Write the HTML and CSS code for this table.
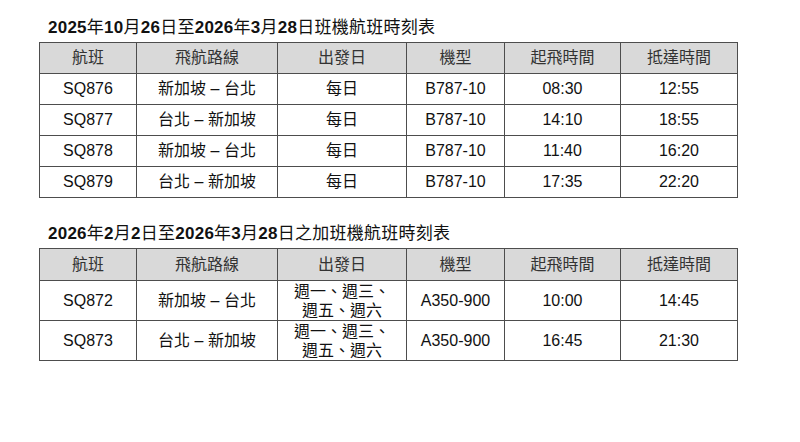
FILE: index.html
```html
<!DOCTYPE html>
<html lang="zh-Hant">
<head>
<meta charset="utf-8">
<title>航班時刻表</title>
<link rel="stylesheet" href="styles.css">
</head>
<body>
<main class="page">
  <section class="block block-first">
    <h2 class="title"><b>2025</b>年<b>10</b>月<b>26</b>日至<b>2026</b>年<b>3</b>月<b>28</b>日班機航班時刻表</h2>
    <table class="schedule">
      <colgroup>
        <col class="c1"><col class="c2"><col class="c3"><col class="c4"><col class="c5"><col class="c6">
      </colgroup>
      <thead>
        <tr><th>航班</th><th>飛航路線</th><th>出發日</th><th>機型</th><th>起飛時間</th><th>抵達時間</th></tr>
      </thead>
      <tbody>
        <tr><td>SQ876</td><td>新加坡 – 台北</td><td>每日</td><td>B787-10</td><td>08:30</td><td>12:55</td></tr>
        <tr><td>SQ877</td><td>台北 – 新加坡</td><td>每日</td><td>B787-10</td><td>14:10</td><td>18:55</td></tr>
        <tr><td>SQ878</td><td>新加坡 – 台北</td><td>每日</td><td>B787-10</td><td>11:40</td><td>16:20</td></tr>
        <tr><td>SQ879</td><td>台北 – 新加坡</td><td>每日</td><td>B787-10</td><td>17:35</td><td>22:20</td></tr>
      </tbody>
    </table>
  </section>
  <section class="block block-second">
    <h2 class="title"><b>2026</b>年<b>2</b>月<b>2</b>日至<b>2026</b>年<b>3</b>月<b>28</b>日之加班機航班時刻表</h2>
    <table class="schedule schedule-tall">
      <colgroup>
        <col class="c1"><col class="c2"><col class="c3"><col class="c4"><col class="c5"><col class="c6">
      </colgroup>
      <thead>
        <tr><th>航班</th><th>飛航路線</th><th>出發日</th><th>機型</th><th>起飛時間</th><th>抵達時間</th></tr>
      </thead>
      <tbody>
        <tr><td>SQ872</td><td>新加坡 – 台北</td><td>週一、週三、<br>週五、週六</td><td>A350-900</td><td>10:00</td><td>14:45</td></tr>
        <tr><td>SQ873</td><td>台北 – 新加坡</td><td>週一、週三、<br>週五、週六</td><td>A350-900</td><td>16:45</td><td>21:30</td></tr>
      </tbody>
    </table>
  </section>
</main>
</body>
</html>
```

FILE: styles.css
```css
html, body {
  margin: 0;
  padding: 0;
  background: #ffffff;
}

body {
  font-family: "Liberation Sans", "Noto Sans CJK TC", sans-serif;
  color: #111;
}

.page {
  padding: 18px 0 0 39px;
}

.block-second {
  margin-top: 26px;
}

.title {
  margin: 0 0 4px 9px;
  font-size: 17px;
  line-height: 20px;
  font-weight: 400;
  letter-spacing: 0.25px;
  color: #111;
}

.title b {
  font-weight: 700;
}

.schedule {
  border-collapse: collapse;
  table-layout: fixed;
  width: 698px;
}

.c1 { width: 97px; }
.c2 { width: 141px; }
.c3 { width: 129px; }
.c4 { width: 98px; }
.c5 { width: 116px; }
.c6 { width: 117px; }

.schedule th,
.schedule td {
  border: 1px solid #4d4d4d;
  padding: 0;
  height: 30px;
  text-align: center;
  vertical-align: middle;
  font-size: 16px;
  line-height: 20px;
  font-weight: 400;
  color: #111;
}

.schedule th {
  background: #d9d9d9;
  color: #333;
}

.schedule-tall th {
  height: 31px;
}

.schedule-tall td {
  height: 39px;
  line-height: 19px;
}
```
